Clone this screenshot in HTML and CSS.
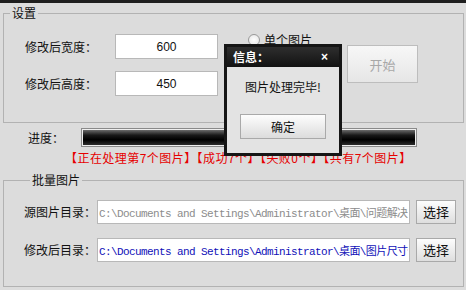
FILE: index.html
```html
<!DOCTYPE html>
<html lang="zh-CN">
<head>
  <meta charset="UTF-8">
  <title>图片尺寸修改</title>
  <link rel="stylesheet" href="styles.css">
</head>
<body>
  <section class="app">
    <fieldset class="settings">
      <legend>设置</legend>
      <div class="settings-row">
        <div class="size-form">
          <label for="width">修改后宽度：</label>
          <input type="text" id="width" value="600">
          <label for="height">修改后高度：</label>
          <input type="text" id="height" value="450">
        </div>
        <div class="mode">
          <label class="radio"><span class="dot"></span>单个图片</label>
          <label class="radio"><span class="dot checked"></span>批量图片</label>
        </div>
        <button type="button" class="start" disabled>开始</button>
      </div>
    </fieldset>

    <div class="progress">
      <span class="progress-label">进度：</span>
      <div class="bar"></div>
    </div>
    <p class="status">【正在处理第7个图片】【成功7个】【失败0个】【共有7个图片】</p>

    <fieldset class="batch">
      <legend>批量图片</legend>
      <div class="path-row">
        <label for="src">源图片目录：</label>
        <input type="text" id="src" class="path" disabled value="C:\Documents and Settings\Administrator\桌面\问题解决\图片">
        <button type="button" class="pick">选择</button>
      </div>
      <div class="path-row">
        <label for="dest">修改后目录：</label>
        <input type="text" id="dest" class="path out" value="C:\Documents and Settings\Administrator\桌面\图片尺寸修改">
        <button type="button" class="pick">选择</button>
      </div>
    </fieldset>
  </section>

  <div class="dialog">
    <div class="dialog-title">
      <span>信息：</span>
      <span class="close">×</span>
    </div>
    <div class="dialog-body">
      <p>图片处理完毕!</p>
      <button type="button" class="ok">确定</button>
    </div>
  </div>
</body>
</html>
```

FILE: styles.css
```css
body {
  margin: 0;
  height: 287px;
  overflow: hidden;
  position: relative;
  background: #dcdcdc;
  border-top: 3px solid #1e1e1e;
  font: 12px/16px "Noto Sans CJK SC", "Liberation Sans", sans-serif;
  color: #111;
}
.app {
  padding: 0 2px 0 3px;
}
fieldset {
  margin: 0;
  padding: 0;
  border: 1px solid #b2b2b2;
  min-width: 0;
}
legend {
  margin-left: 6px;
  padding: 0 2px;
  font-size: 12px;
  line-height: 14px;
}
.settings {
  margin-top: 3px;
  height: 117px;
  box-sizing: border-box;
}
.settings-row {
  display: flex;
  align-items: flex-start;
  padding: 13px 0 0 21px;
}
.size-form {
  display: grid;
  grid-template-columns: 90px 103px;
  grid-auto-rows: 25px;
  row-gap: 12px;
  align-items: center;
  margin-top: 1px;
}
.size-form input {
  box-sizing: border-box;
  width: 103px;
  height: 25px;
  border: 1px solid #b8b8b8;
  background: #fff;
  text-align: center;
  font: 12px "Liberation Sans", sans-serif;
  color: #111;
  outline: none;
}
.mode {
  width: 99px;
  margin-left: 30px;
}
.radio {
  display: flex;
  align-items: center;
  height: 14px;
  margin-bottom: 12px;
}
.dot {
  flex: none;
  width: 10px;
  height: 10px;
  border: 1px solid #999;
  border-radius: 50%;
  background: radial-gradient(#fff, #e4e4e4);
  margin-right: 4px;
}
.dot.checked {
  background: radial-gradient(#222 30%, #fff 40%);
}
.start {
  width: 71px;
  height: 38px;
  margin-top: 12px;
  border: 1px solid #bdbdbd;
  background: linear-gradient(#f7f7f7, #e6e6e6);
  color: #a8a8a8;
  font: 13px "Noto Sans CJK SC", sans-serif;
}
.progress {
  display: flex;
  align-items: center;
  margin-top: 6px;
  padding-left: 25px;
  height: 17px;
}
.progress-label {
  width: 54px;
}
.bar {
  width: 332px;
  height: 15px;
  border: 1px solid #eeeeee;
  box-shadow: 0 0 0 1px #8a8a8a;
  background: linear-gradient(#6a6a6a, #181818 35%, #000 65%, #2c2c2c);
}
.status {
  margin: 4px 0 0;
  padding-left: 62px;
  font-size: 12px;
  letter-spacing: 0.45px;
  line-height: 16px;
  color: #e60000;
  white-space: nowrap;
}
.batch {
  margin-top: 7px;
  height: 114px;
  box-sizing: border-box;
  padding: 12px 0 0 20px;
}
.path-row {
  display: flex;
  align-items: center;
  height: 25px;
  margin-bottom: 13px;
}
.path-row label {
  width: 73px;
}
.path {
  box-sizing: border-box;
  width: 313px;
  height: 24px;
  padding: 0 1px;
  border: 1px solid #b8b8b8;
  background: #fff;
  font: 11px "Liberation Mono", "Noto Sans CJK SC", monospace;
  letter-spacing: -0.6px;
  color: #8c8c8c;
  outline: none;
}
.path.out {
  color: #1010b8;
}
.pick {
  width: 40px;
  height: 24px;
  margin-left: 6px;
  padding: 0;
  border: 1px solid #a9a9a9;
  background: linear-gradient(#fdfdfd, #dedede);
  font: 13px "Noto Sans CJK SC", sans-serif;
  color: #111;
}
.dialog {
  position: absolute;
  left: 224px;
  top: 41px;
  width: 112px;
  height: 106px;
  border: 3px solid #151515;
  background: #e3e3e3;
}
.dialog-title {
  display: flex;
  justify-content: space-between;
  align-items: center;
  height: 20px;
  padding: 0 11px 0 6px;
  background: linear-gradient(#2e2e2e, #121212);
  color: #fff;
  font-weight: bold;
  font-size: 12px;
}
.close {
  font: bold 12px "Liberation Sans", sans-serif;
}
.dialog-body {
  display: flex;
  flex-direction: column;
  align-items: center;
}
.dialog-body p {
  margin: 12px 0 0;
  line-height: 16px;
}
.ok {
  width: 86px;
  height: 25px;
  margin-top: 19px;
  border: 1px solid #a9a9a9;
  background: linear-gradient(#fdfdfd, #dcdcdc);
  font: 12px "Noto Sans CJK SC", sans-serif;
  color: #111;
}
```
